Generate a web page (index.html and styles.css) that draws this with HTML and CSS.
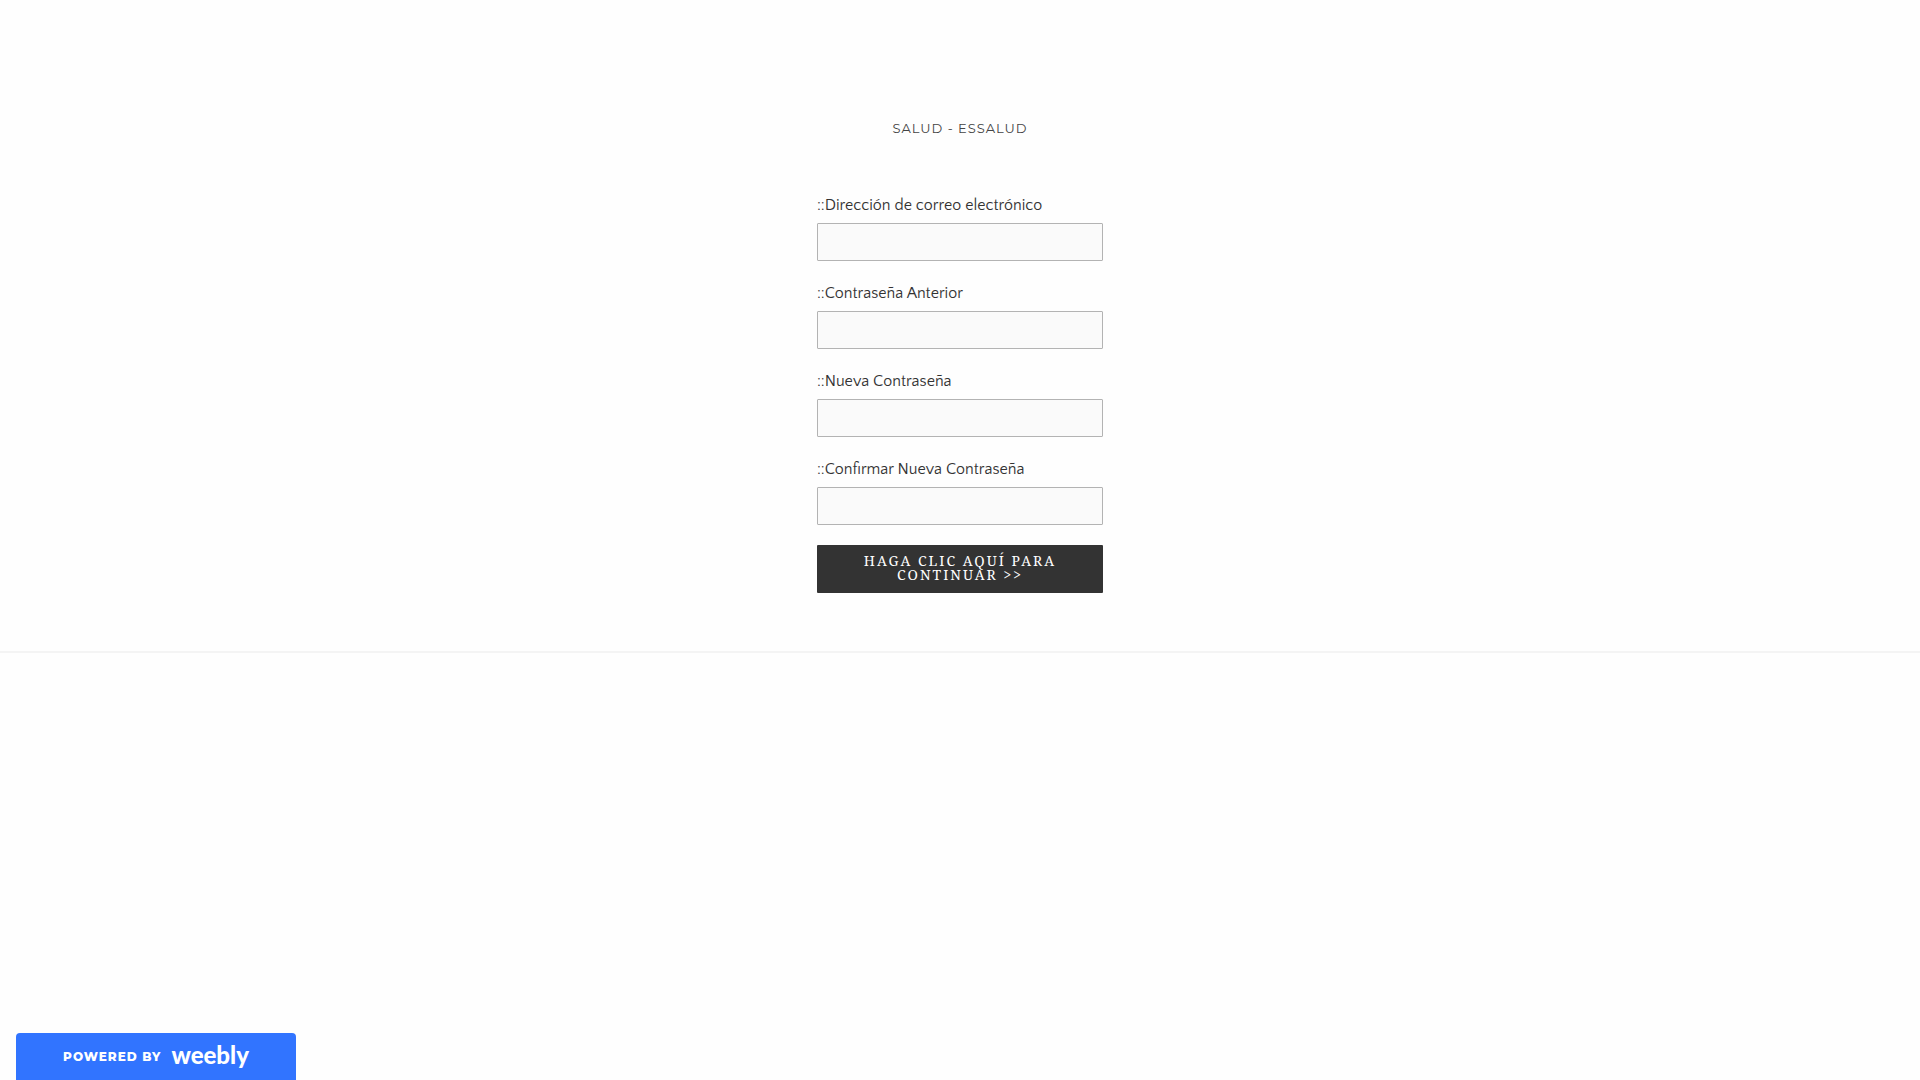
FILE: index.html
```html
<!DOCTYPE html>
<html lang="es">
<head>
    <meta charset="UTF-8">
    <meta name="viewport" content="width=device-width, initial-scale=1.0">
    <title>SALUD - ESSALUD</title>
    <link rel="stylesheet" href="styles.css">
</head>
<body>
    <main class="main">
        <h1 class="site-title">SALUD - ESSALUD</h1>

        <form class="form" method="post">
            <div class="form-field">
                <label for="email">::Dirección de correo electrónico</label>
                <input type="text" id="email" name="email">
            </div>
            <div class="form-field">
                <label for="oldPassword">::Contraseña Anterior</label>
                <input type="password" id="oldPassword" name="oldPassword">
            </div>
            <div class="form-field">
                <label for="newPassword">::Nueva Contraseña</label>
                <input type="password" id="newPassword" name="newPassword">
            </div>
            <div class="form-field">
                <label for="confirmPassword">::Confirmar Nueva Contraseña</label>
                <input type="password" id="confirmPassword" name="confirmPassword">
            </div>
            <button type="submit" class="submit-btn">Haga clic aquí para continuar &gt;&gt;</button>
        </form>
    </main>

    <a href="#" class="powered-by">
        <span class="powered-text">Powered by</span>
        <span class="powered-logo">weebly</span>
    </a>
</body>
</html>
```
FILE: styles.css
```css
* {
    box-sizing: border-box;
}

body {
    margin: 0;
    background-color: #fefefe;
    color: #333;
    font-family: "Quattrocento Sans", Lato, sans-serif;
}

.main {
    display: flex;
    flex-direction: column;
    align-items: center;
    padding: 118px 20px 58px;
    border-bottom: 2px solid #f4f4f4;
}

.site-title {
    margin: 0 0 55px;
    font-family: Montserrat, Inter, sans-serif;
    font-size: 13px;
    font-weight: 400;
    line-height: 20px;
    letter-spacing: 1px;
    color: #444;
}

.form {
    display: flex;
    flex-direction: column;
    gap: 20px;
    width: 100%;
    max-width: 286px;
}

.form-field label {
    display: block;
    margin-bottom: 6px;
    font-size: 16px;
    line-height: 24px;
}

.form-field input {
    display: block;
    width: 100%;
    height: 38px;
    padding: 8px;
    border: 1px solid #b3b3b3;
    border-radius: 1px;
    background-color: #fafafa;
    font: inherit;
    color: inherit;
}

.submit-btn {
    width: 100%;
    padding: 9px 30px 11px;
    border: none;
    border-radius: 1px;
    background-color: #333;
    color: #fff;
    font-family: "Droid Serif", "Noto Serif", "DejaVu Serif", serif;
    font-size: 14px;
    line-height: 14px;
    letter-spacing: 2px;
    text-transform: uppercase;
    cursor: pointer;
}

.powered-by {
    position: fixed;
    bottom: 0;
    left: 16px;
    display: flex;
    justify-content: center;
    align-items: center;
    gap: 10px;
    width: 280px;
    height: 47px;
    border-radius: 4px 4px 0 0;
    background-color: #3174ff;
    color: #fff;
    text-decoration: none;
}

.powered-text {
    font-family: Montserrat, Inter, sans-serif;
    font-size: 12px;
    font-weight: 800;
    letter-spacing: 1px;
    text-transform: uppercase;
}

.powered-logo {
    padding-bottom: 4px;
    font-family: Lato, sans-serif;
    font-size: 24px;
    font-weight: 900;
    line-height: 28px;
}
```
